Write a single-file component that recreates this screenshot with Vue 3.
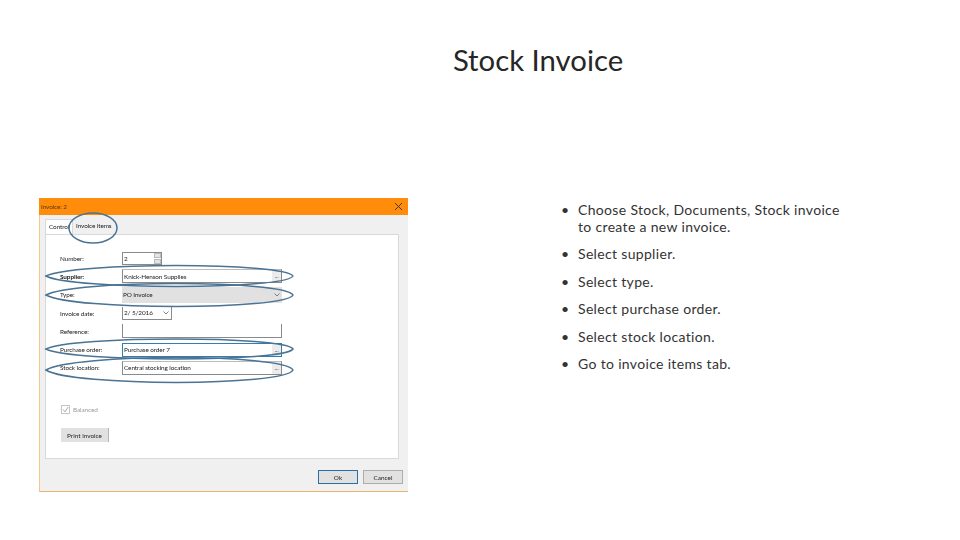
<script setup>
const rows = [
  { label: 'Number:', kind: 'number', value: '2' },
  { label: 'Supplier:', kind: 'browse', value: 'Knick-Henson Supplies', strong: true },
  { label: 'Type:', kind: 'select', value: 'PO Invoice' },
  { label: 'Invoice date:', kind: 'date', value: '2/ 5/2016' },
  { label: 'Reference:', kind: 'text', value: '' },
  { label: 'Purchase order:', kind: 'browse', value: 'Purchase order 7', focus: true },
  { label: 'Stock location:', kind: 'browse', value: 'Central stocking location' },
]
const steps = [
  'Choose Stock, Documents, Stock invoice to create a new invoice.',
  'Select supplier.',
  'Select type.',
  'Select purchase order.',
  'Select stock location.',
  'Go to invoice items tab.',
]
const lens = (cy, ry) => {
  const l = 7
  const r = 254
  const k = ry * 1.33
  return `M${l} ${cy}C${l + 26} ${cy - k} ${r - 8} ${cy - k} ${r} ${cy}C${r - 8} ${cy + k} ${l + 26} ${cy + k} ${l} ${cy}Z`
}
const marks = [
  lens(78, 10.5),
  lens(97, 11.5),
  lens(151, 10),
  lens(172, 12.5),
]
</script>

<template>
  <main class="slide">
    <h1 class="title">Stock Invoice</h1>
    <section class="content">
      <div class="dialog">
        <header class="titlebar">
          <span>Invoice: 2</span>
          <svg class="close" width="9" height="9" viewBox="0 0 9 9">
            <path d="M1 1L8 8M8 1L1 8" stroke="#4a3a20" stroke-width="1" fill="none" />
          </svg>
        </header>
        <div class="tabs">
          <span class="tab active">Control</span>
          <span class="tab">Invoice items</span>
        </div>
        <div class="panel">
          <div class="form">
            <div v-for="row in rows" :key="row.label" class="row">
              <label class="label" :class="{ strong: row.strong }">{{ row.label }}</label>
              <div class="field" :class="[row.kind, { focus: row.focus }]">
                <span class="value">{{ row.value }}</span>
                <span v-if="row.kind === 'browse'" class="dots">...</span>
                <svg v-if="row.kind === 'select' || row.kind === 'date'" class="chev" width="6" height="4" viewBox="0 0 6 4">
                  <path d="M0.5 0.5L3 3L5.5 0.5" stroke="#666" stroke-width="0.8" fill="none" />
                </svg>
                <span v-if="row.kind === 'number'" class="spin"><i></i><i></i></span>
              </div>
            </div>
          </div>
          <div class="check">
            <span class="box">
              <svg width="7" height="7" viewBox="0 0 7 7">
                <path d="M1 3.5L3 5.8L6.2 1" stroke="#a8a8a8" stroke-width="1" fill="none" />
              </svg>
            </span>
            <span>Balanced</span>
          </div>
          <button class="print" type="button">Print invoice</button>
        </div>
        <footer class="actions">
          <button class="btn default" type="button">Ok</button>
          <button class="btn" type="button">Cancel</button>
        </footer>
        <svg class="marks" width="369" height="294" viewBox="0 0 369 294">
          <ellipse cx="54" cy="30" rx="24" ry="15" fill="none" stroke="#4a7394" stroke-width="1.5" />
          <path v-for="d in marks" :key="d" :d="d" fill="none" stroke="#4a7394" stroke-width="1.5" />
        </svg>
      </div>
      <ul class="steps">
        <li v-for="step in steps" :key="step">{{ step }}</li>
      </ul>
    </section>
  </main>
</template>

<style>
html, body { margin: 0; background: #fff; }
</style>

<style scoped>
.slide {
  width: 960px;
  height: 540px;
  overflow: hidden;
  background: #fff;
  font-family: Lato, "Liberation Sans", sans-serif;
  color: #262626;
}
.title {
  margin: 0;
  padding: 41px 0 0 116px;
  height: 198px;
  box-sizing: border-box;
  text-align: center;
  font-size: 29.3px;
  line-height: 38px;
  font-weight: 400;
}
.content {
  display: flex;
  align-items: flex-start;
  padding-left: 39px;
}
.dialog {
  position: relative;
  width: 369px;
  height: 294px;
  box-sizing: border-box;
  display: flex;
  flex-direction: column;
  background: #f0f0f0;
  border-left: 1px solid #f5c78e;
  border-bottom: 1px solid #e9b26f;
  font-size: 6.4px;
  letter-spacing: -0.1px;
  color: #222;
  filter: blur(0.35px);
}
.titlebar {
  height: 17px;
  flex: none;
  display: flex;
  align-items: center;
  justify-content: space-between;
  padding: 0 5px 0 2px;
  margin-left: -1px;
  background: #ff8c0a;
  color: #5c3a10;
}
.tabs {
  display: flex;
  height: 19px;
  flex: none;
  align-items: flex-end;
  padding-left: 5px;
}
.tab {
  padding: 0 3px;
  height: 15px;
  line-height: 14px;
}
.active {
  width: 20px;
  background: #fff;
  border: 1px solid #d9d9d9;
  border-bottom: 0;
  margin-bottom: -1px;
}
.panel {
  width: 354px;
  height: 225px;
  flex: none;
  margin-left: 5px;
  box-sizing: border-box;
  background: #fff;
  border: 1px solid #d9d9d9;
  padding-top: 14px;
  display: flex;
  flex-direction: column;
}
.form {
  display: grid;
  grid-auto-rows: 18.3px;
}
.row {
  display: flex;
  align-items: center;
  padding-left: 14px;
}
.label {
  width: 62px;
  flex: none;
}
.strong { font-weight: 700; }
.field {
  position: relative;
  width: 160px;
  height: 14px;
  box-sizing: border-box;
  display: flex;
  align-items: center;
  padding: 0 0 0 1px;
  background: #fff;
  border: 1px solid #8a8a8a;
  border-top: 0;
  border-left: 0;
}
.text { border-left: 1px solid #8a8a8a; }
.browse { border-left: 1px solid #8a8a8a; border-top: 1px solid #bbb; }
.number { width: 40px; height: 13px; border: 1px solid #8a8a8a; }
.select { height: 16px; background: #e1e1e1; border: 0; }
.date { width: 50px; height: 13px; border: 1px solid #8a8a8a; border-top: 0; }
.focus { border: 1px solid #2f7fb0; }
.value { flex: 1; white-space: nowrap; }
.dots {
  width: 9px;
  align-self: stretch;
  text-align: center;
  line-height: 11px;
  color: #444;
  background: #ececec;
}
.chev { margin-right: 2px; }
.spin {
  width: 7px;
  height: 11px;
  display: flex;
  flex-direction: column;
  gap: 1px;
}
.spin i {
  flex: 1;
  background: #e4e4e4;
  border: 0.5px solid #bbb;
}
.check {
  display: flex;
  align-items: center;
  gap: 3px;
  margin: 28px 0 0 15px;
  color: #9a9a9a;
}
.box {
  width: 7px;
  height: 7px;
  display: flex;
  border: 1px solid #c4c4c4;
}
.print {
  width: 48px;
  height: 14px;
  margin: 14px 0 0 15px;
  padding: 0;
  font: inherit;
  color: #222;
  background: #e1e1e1;
  border: 0;
  border-right: 1px solid #b5b5b5;
}
.actions {
  display: flex;
  justify-content: flex-end;
  gap: 5px;
  padding: 11px 5px 0 0;
}
.btn {
  width: 40px;
  height: 14px;
  padding: 0;
  font: inherit;
  color: #222;
  background: #e1e1e1;
  border: 1px solid #adadad;
  box-sizing: border-box;
}
.default { border: 1px solid #2a6f9f; border-width: 1px 1px 1.5px 1px; }
.marks {
  position: absolute;
  left: -1px;
  top: 0;
  pointer-events: none;
}
.steps {
  width: 280px;
  margin: 3px 0 0 153px;
  padding: 0;
  list-style: none;
  font-size: 14px;
  line-height: 17px;
  letter-spacing: 0.33px;
  color: #333;
}
.steps li {
  display: flex;
  margin-bottom: 10.4px;
}
.steps li::before {
  content: "\2022";
  flex: none;
  width: 17px;
}
</style>
